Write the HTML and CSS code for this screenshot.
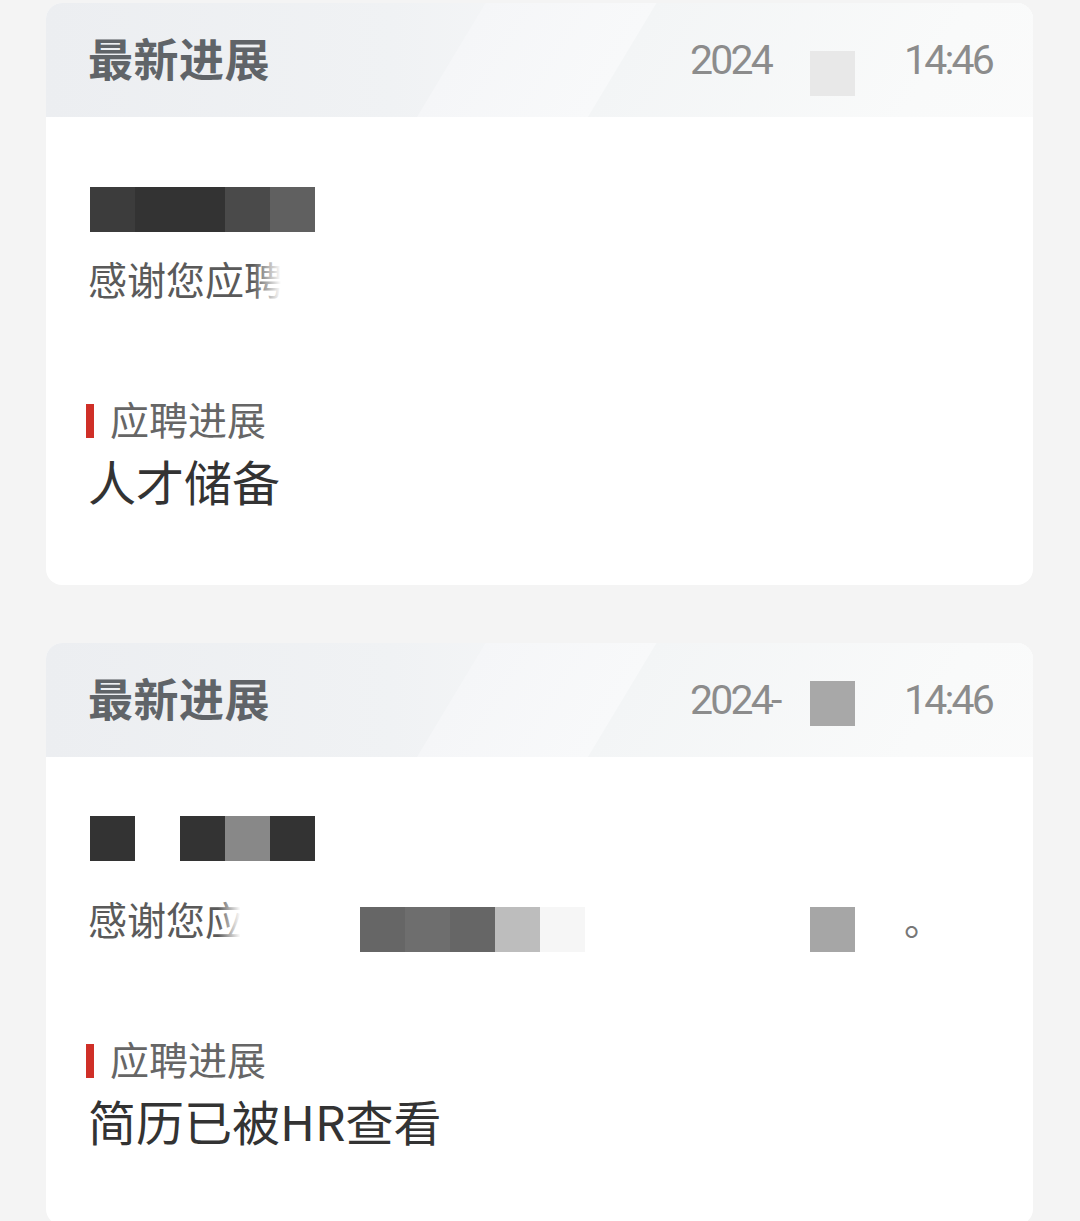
FILE: index.html
```html
<!DOCTYPE html>
<html lang="zh-CN">
<head>
<meta charset="utf-8">
<title>最新进展</title>
<link rel="stylesheet" href="styles.css">
</head>
<body>
<div class="list">
  <section class="card">
    <header class="card-head">
      <h2 class="head-title">最新进展</h2>
      <div class="head-date">
        <span class="date-y">2024</span>
        <span class="date-mask date-mask--light"></span>
        <span class="date-t">14:46</span>
      </div>
    </header>
    <div class="card-body">
      <div class="name-row name-row--a">
        <span class="m m-3c"></span><span class="m m-33 m-wide"></span><span class="m m-4a"></span><span class="m m-60"></span>
      </div>
      <div class="msg-row msg-row--a">
        <span class="msg-text">感谢您应聘</span>
        <span class="fade fade--a"></span>
      </div>
      <div class="label-row">
        <span class="label-bar"></span>
        <span class="label-text">应聘进展</span>
      </div>
      <div class="status">人才储备</div>
    </div>
  </section>

  <section class="card">
    <header class="card-head">
      <h2 class="head-title">最新进展</h2>
      <div class="head-date">
        <span class="date-y">2024-</span>
        <span class="date-mask date-mask--dark"></span>
        <span class="date-t">14:46</span>
      </div>
    </header>
    <div class="card-body">
      <div class="name-row name-row--b">
        <span class="m m-33"></span><span class="m m-ff"></span><span class="m m-33"></span><span class="m m-88"></span><span class="m m-33"></span>
      </div>
      <div class="msg-row msg-row--b">
        <span class="msg-text">感谢您应</span>
        <span class="fade fade--b"></span>
        <span class="mosaic mosaic--1">
          <span class="m m-66"></span><span class="m m-6e"></span><span class="m m-66"></span><span class="m m-bd"></span><span class="m m-f6"></span>
        </span>
        <span class="mosaic mosaic--2"><span class="m m-a6"></span></span>
        <span class="period">。</span>
      </div>
      <div class="label-row">
        <span class="label-bar"></span>
        <span class="label-text">应聘进展</span>
      </div>
      <div class="status">简历已被HR查看</div>
    </div>
  </section>
</div>
</body>
</html>
```

FILE: styles.css
```css
* { box-sizing: border-box; }

html, body {
  margin: 0;
  padding: 0;
  background: #f4f4f4;
}

body {
  font-family: "Noto Sans CJK SC", "Noto Sans", sans-serif;
  overflow: hidden;
}

.list {
  padding-top: 3px;
  display: flex;
  flex-direction: column;
  gap: 58px;
}

.card {
  margin: 0 47px 0 46px;
  background: #ffffff;
  border-radius: 16px;
  overflow: hidden;
  padding-bottom: 77px;
}

/* header */
.card-head {
  position: relative;
  height: 114px;
  display: flex;
  align-items: center;
  justify-content: space-between;
  padding: 0 41px 0 42px;
  background: linear-gradient(to right, #eceef1 0%, #f0f2f4 35%, #f7f8f9 60%, #fafafa 100%);
  overflow: hidden;
}

.card-head::before {
  content: "";
  position: absolute;
  top: 0;
  bottom: 0;
  left: 371px;
  width: 171px;
  transform: skewX(-31deg);
  transform-origin: bottom left;
  background: linear-gradient(to right, #f5f6f8, #f8f9fa);
}

.card-head::after {
  content: "";
  position: absolute;
  top: 0;
  bottom: 0;
  left: 542px;
  right: -80px;
  transform: skewX(-31deg);
  transform-origin: bottom left;
  background: linear-gradient(to right, #f3f5f6, #f9fafa 60%, #fbfbfb);
}

.head-title {
  position: relative;
  z-index: 1;
  margin: -4px 0 0 0;
  font-size: 45px;
  font-weight: 700;
  line-height: 56px;
  color: #606468;
  letter-spacing: 0.5px;
}

.head-date {
  position: relative;
  z-index: 1;
  display: flex;
  align-items: center;
  font-family: Roboto, "Noto Sans", sans-serif;
  font-size: 41px;
  line-height: 48px;
  color: #8c8c8c;
  letter-spacing: -2.8px;
}

.date-y {
  width: 120px;
  white-space: nowrap;
}

.date-mask {
  width: 45px;
  height: 45px;
}

.date-mask--light {
  background: #e8e8e8;
  margin-top: 26px;
}

.date-mask--dark {
  background: #a8a8a8;
  margin-top: 7px;
}

.date-t {
  width: 90px;
  margin-left: 47px;
  text-align: right;
  white-space: nowrap;
}

/* body */
.card-body {
  padding: 0 42px;
}

.name-row {
  display: flex;
  margin-left: 2px;
  height: 45px;
}

.name-row--a { margin-top: 70px; }
.name-row--b { margin-top: 59px; }

.m {
  display: block;
  width: 45px;
  height: 45px;
  flex: none;
}

.m-wide { width: 90px; }
.m-3c { background: #3c3c3c; }
.m-33 { background: #333333; }
.m-4a { background: #4a4a4a; }
.m-60 { background: #606060; }
.m-ff { background: #ffffff; }
.m-88 { background: #888888; }
.m-66 { background: #666666; }
.m-6e { background: #6e6e6e; }
.m-bd { background: #bdbdbd; }
.m-f6 { background: #f6f6f6; }
.m-a6 { background: #a6a6a6; }

.msg-row {
  position: relative;
  height: 45px;
  font-size: 39px;
  line-height: 45px;
  color: #5a5a5a;
  white-space: nowrap;
}

.msg-row--a { margin-top: 24px; }
.msg-row--b { margin-top: 35px; }

.msg-text { display: inline-block; }

.fade {
  position: absolute;
  top: 0;
  height: 45px;
  background: linear-gradient(to right, rgba(255,255,255,0), #ffffff 70%);
}

.fade--a { left: 165px; width: 40px; }
.fade--b { left: 130px; width: 32px; }

.mosaic {
  position: absolute;
  top: 11px;
  display: flex;
}

.mosaic--1 { left: 272px; }
.mosaic--2 { left: 722px; }

.period {
  position: absolute;
  top: 0;
  left: 816px;
  color: #777;
}

.label-row {
  margin-top: 96px;
  height: 45px;
  display: flex;
  align-items: center;
}

.label-bar {
  width: 8px;
  height: 34px;
  background: #cf2f27;
  margin-left: -2px;
  margin-right: 16px;
  margin-top: 2px;
}

.label-text {
  font-size: 39px;
  line-height: 45px;
  color: #666666;
  margin-top: -3px;
}

.status {
  margin-top: 10px;
  font-size: 48px;
  line-height: 56px;
  color: #333333;
  white-space: nowrap;
}
```
